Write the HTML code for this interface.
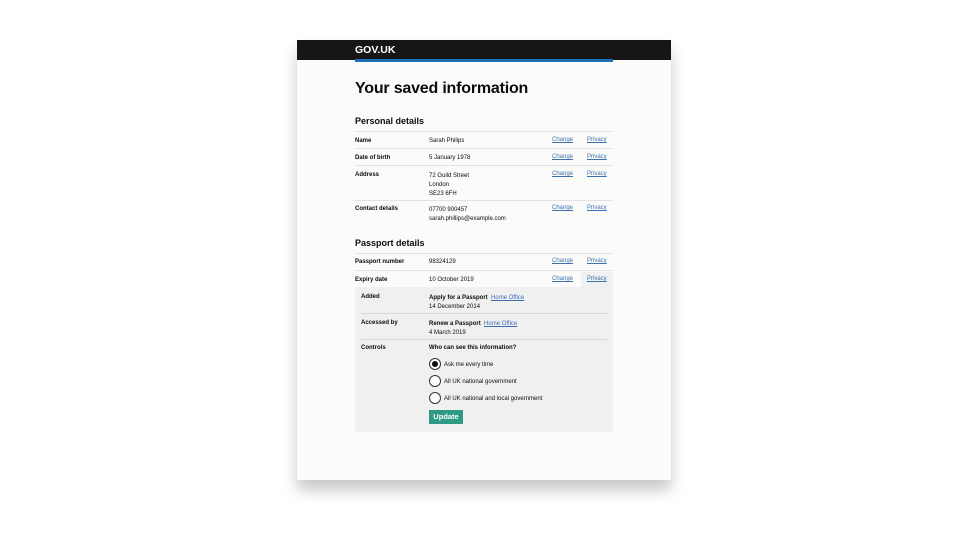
<!DOCTYPE html>
<html><head><style>
body{margin:0;width:960px;height:540px;background:#fff;font-family:"Liberation Sans",Arial,sans-serif;position:relative;overflow:hidden;color:#0b0c0c}
.card{position:absolute;left:297px;top:40px;width:374px;height:440px;background:#fbfbf9;box-shadow:0 10px 14px rgba(0,0,0,.22)}
.hdr{position:absolute;left:297px;top:40px;width:374px;height:20px;background:#161616}
.hdr span{position:absolute;left:58px;top:4px;color:#fff;font-weight:bold;font-size:10.5px}
.blue{position:absolute;left:355px;top:59px;width:258px;height:3px;background:#1d70b8}
.a{position:absolute;white-space:nowrap}
.t{font-size:6px;margin-top:1px}
.b{font-weight:bold}
.l{color:#3d6fb0;text-decoration:underline;font-size:6px;margin-top:1px}
.t .l{margin-top:0}
.hr{position:absolute;height:1px;background:#e2e2e2}
.r{position:absolute;width:10px;height:10px;border:1px solid #333;border-radius:50%;background:#fff}
</style></head><body>
<div class="card"></div>
<div class="hdr"><span>GOV.UK</span></div>
<div class="blue"></div>
<div class="a b" style="left:355px;top:80px;font-size:16px;letter-spacing:-0.2px">Your saved information</div>
<div class="a b" style="left:355px;top:116px;font-size:9px">Personal details</div>
<div class="hr" style="left:355px;top:131px;width:258px"></div>
<div class="a t b" style="left:355px;top:137px">Name</div><div class="a t" style="left:429px;top:137px">Sarah Philips</div>
<div class="a l" style="left:552px;top:136px">Change</div><div class="a l" style="left:587px;top:136px">Privacy</div>
<div class="hr" style="left:355px;top:148px;width:258px"></div>
<div class="a t b" style="left:355px;top:154px">Date of birth</div><div class="a t" style="left:429px;top:154px">5 January 1978</div>
<div class="a l" style="left:552px;top:153px">Change</div><div class="a l" style="left:587px;top:153px">Privacy</div>
<div class="hr" style="left:355px;top:165px;width:258px"></div>
<div class="a t b" style="left:355px;top:171px">Address</div><div class="a t" style="left:429px;top:171px;line-height:9px">72 Guild Street<br>London<br>SE23 6FH</div>
<div class="a l" style="left:552px;top:170px">Change</div><div class="a l" style="left:587px;top:170px">Privacy</div>
<div class="hr" style="left:355px;top:200px;width:258px"></div>
<div class="a t b" style="left:355px;top:205px">Contact details</div><div class="a t" style="left:429px;top:205px;line-height:9px">07700 900457<br>sarah.phillips@example.com</div>
<div class="a l" style="left:552px;top:204px">Change</div><div class="a l" style="left:587px;top:204px">Privacy</div>
<div class="a b" style="left:355px;top:238px;font-size:9px">Passport details</div>
<div class="hr" style="left:355px;top:253px;width:258px"></div>
<div class="a t b" style="left:355px;top:258px">Passport number</div><div class="a t" style="left:429px;top:258px">98324129</div>
<div class="a l" style="left:552px;top:257px">Change</div><div class="a l" style="left:587px;top:257px">Privacy</div>
<div class="hr" style="left:355px;top:270px;width:258px"></div>
<div style="position:absolute;left:581px;top:272px;width:32px;height:16px;background:#f0f0f0"></div>
<div style="position:absolute;left:355px;top:287px;width:258px;height:145px;background:#f0f0f0"></div>
<div class="a t b" style="left:355px;top:276px">Expiry date</div><div class="a t" style="left:429px;top:276px">10 October 2019</div>
<div class="a l" style="left:552px;top:275px">Change</div><div class="a l" style="left:587px;top:275px">Privacy</div>
<div class="a t b" style="left:361px;top:293px">Added</div>
<div class="a t" style="left:429px;top:293px;line-height:8.5px"><b>Apply for a Passport</b> &nbsp;<span class="l">Home Office</span><br>14 December 2014</div>
<div class="hr" style="left:361px;top:313px;width:246px;background:#d8d8d8"></div>
<div class="a t b" style="left:361px;top:319px">Accessed by</div>
<div class="a t" style="left:429px;top:319px;line-height:8.5px"><b>Renew a Passport</b> &nbsp;<span class="l">Home Office</span><br>4 March 2019</div>
<div class="hr" style="left:361px;top:339px;width:246px;background:#d8d8d8"></div>
<div class="a t b" style="left:361px;top:344px">Controls</div>
<div class="a t b" style="left:429px;top:344px">Who can see this information?</div>
<div class="r" style="left:429px;top:358px"><div style="position:absolute;left:2px;top:2px;width:6px;height:6px;border-radius:50%;background:#0b0c0c"></div></div>
<div class="a t" style="left:444px;top:361px">Ask me every time</div>
<div class="r" style="left:429px;top:375px"></div>
<div class="a t" style="left:444px;top:378px">All UK national government</div>
<div class="r" style="left:429px;top:392px"></div>
<div class="a t" style="left:444px;top:395px">All UK national and local government</div>
<div style="position:absolute;left:429px;top:410px;width:34px;height:14px;background:#2e9a83;color:#fff;font-size:7.5px;font-weight:bold;text-align:center;line-height:13px">Update</div>
</body></html>
